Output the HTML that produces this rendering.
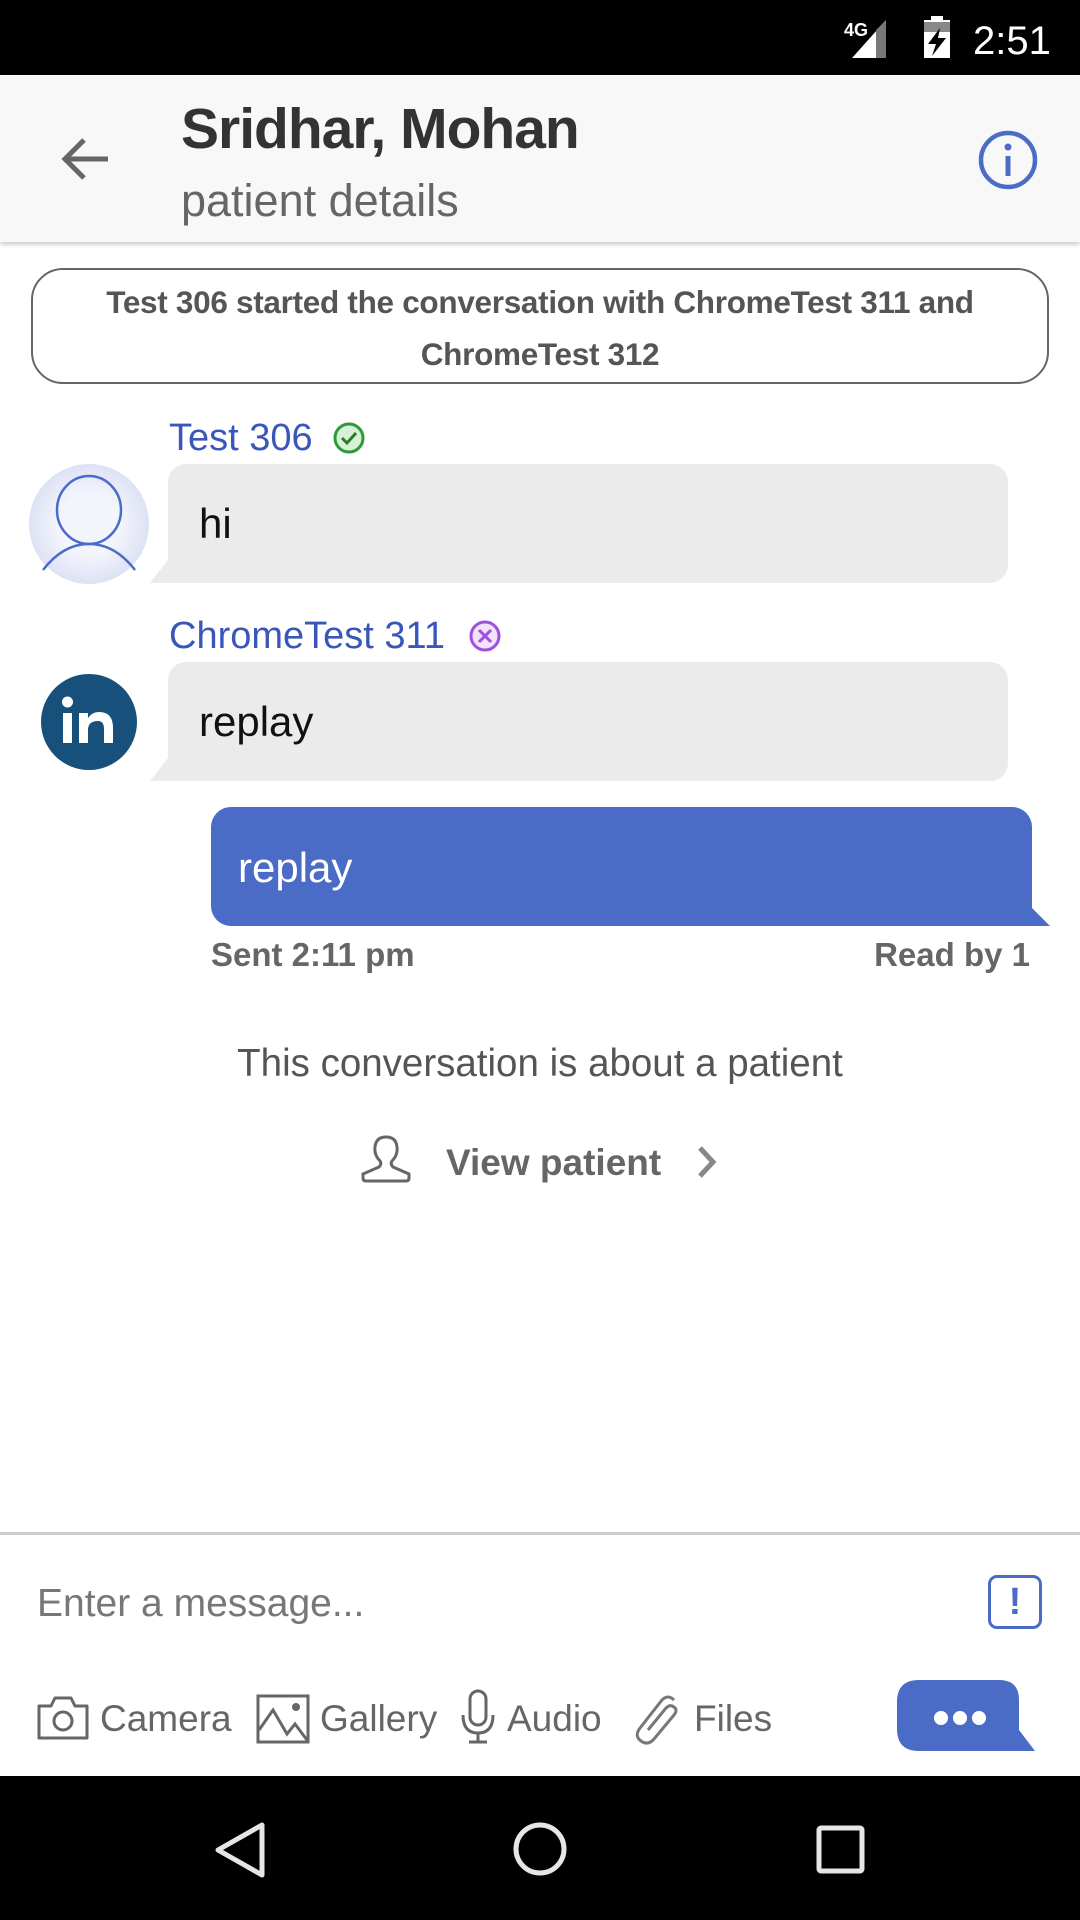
<!DOCTYPE html>
<html><head><meta charset="utf-8"><style>
*{margin:0;padding:0;box-sizing:border-box}
body{width:1080px;height:1920px;position:relative;background:#fff;font-family:"Liberation Sans",sans-serif;overflow:hidden}
.a{position:absolute}
.t{position:absolute;white-space:nowrap;line-height:1}
</style></head><body>
<div class="a" style="left:0;top:0;width:1080px;height:75px;background:#000"></div>
<svg class="a" style="left:840px;top:14px" width="230" height="50">
<text x="4" y="22" fill="#fff" font-size="18" font-weight="bold" font-family="Liberation Sans">4G</text>
<polygon points="12,44 46,6 46,44" fill="#fff"/><polygon points="36,16 46,6 46,44 36,44" fill="#777"/>
<rect x="84" y="6" width="26" height="38" fill="#fff"/><rect x="91" y="2" width="12" height="6" fill="#fff"/>
<rect x="84" y="8" width="26" height="10" fill="#888"/>
<polygon points="100,14 88,30 96,30 92,42 106,24 98,24" fill="#000"/>
<text x="133" y="40" fill="#fff" font-size="40" font-family="Liberation Sans">2:51</text>
</svg>
<div class="a" style="left:0;top:75px;width:1080px;height:167px;background:#f8f8f8;box-shadow:0 3px 4px rgba(0,0,0,.18)"></div>
<svg class="a" style="left:58px;top:134px" width="54" height="50"><path d="M50 25H8M26 6L7 25l19 19" stroke="#666" stroke-width="5" fill="none"/></svg>
<div class="t" style="left:181px;top:101px;font-size:57px;color:#333;font-weight:bold;letter-spacing:-1px">Sridhar, Mohan</div>
<div class="t" style="left:181px;top:178px;font-size:45px;color:#666">patient details</div>
<svg class="a" style="left:976px;top:128px" width="64" height="64"><circle cx="32" cy="32" r="27" stroke="#4a6cc6" stroke-width="4.5" fill="none"/><rect x="29.5" y="28" width="5" height="20" fill="#4a6cc6"/><circle cx="32" cy="19" r="3.5" fill="#4a6cc6"/></svg>

<div class="a" style="left:31px;top:268px;width:1018px;height:116px;border:2.5px solid #666;border-radius:32px"></div>
<div class="t" style="left:31px;width:1018px;top:276px;text-align:center;font-size:31.5px;font-weight:bold;color:#555;line-height:52px;letter-spacing:-0.3px">Test 306 started the conversation with ChromeTest 311 and<br>ChromeTest 312</div>

<div class="t" style="left:169px;top:419px;font-size:38px;color:#3a56b8">Test 306</div>
<svg class="a" style="left:332px;top:421px" width="34" height="34"><circle cx="17" cy="17" r="14" fill="#d6f1d6" stroke="#2d9a3a" stroke-width="3"/><path d="M10 17l5 5 9-10" stroke="#2d7a2d" stroke-width="3" fill="none"/></svg>
<svg class="a" style="left:29px;top:464px" width="122" height="122"><defs><radialGradient id="g"><stop offset="0.5" stop-color="#f4f5fc"/><stop offset="1" stop-color="#dde2f4"/></radialGradient></defs><circle cx="60" cy="60" r="60" fill="url(#g)"/><ellipse cx="60" cy="46" rx="32" ry="34" fill="none" stroke="#4a6cc6" stroke-width="2.5"/><path d="M14 106Q34 80 60 80Q86 80 106 106" fill="none" stroke="#4a6cc6" stroke-width="2.5"/></svg>
<div class="a" style="left:168px;top:464px;width:840px;height:119px;background:#ebebeb;border-radius:18px 18px 18px 0"></div>
<svg class="a" style="left:150px;top:560px" width="20" height="23"><polygon points="18,0 20,23 0,23" fill="#ebebeb"/></svg>
<div class="t" style="left:199px;top:503px;font-size:42px;color:#111">hi</div>

<div class="t" style="left:169px;top:617px;font-size:38px;color:#3a56b8">ChromeTest 311</div>
<svg class="a" style="left:468px;top:619px" width="34" height="34"><circle cx="17" cy="17" r="14" fill="#f1e3fa" stroke="#a050e0" stroke-width="3"/><path d="M11 11l12 12M23 11L11 23" stroke="#a050e0" stroke-width="3"/></svg>
<svg class="a" style="left:40px;top:673px" width="98" height="98"><circle cx="49" cy="49" r="48" fill="#17507a"/><rect x="23" y="40" width="9" height="30" fill="#fff"/><circle cx="27.5" cy="29" r="5.5" fill="#fff"/><path d="M39 70V40h9v5q4-6 11-6q14 0 14 16v15h-9V56q0-8-6-8q-10 0-10 9v13z" fill="#fff"/></svg>
<div class="a" style="left:168px;top:662px;width:840px;height:119px;background:#ebebeb;border-radius:18px 18px 18px 0"></div>
<svg class="a" style="left:150px;top:758px" width="20" height="23"><polygon points="18,0 20,23 0,23" fill="#ebebeb"/></svg>
<div class="t" style="left:199px;top:701px;font-size:42px;color:#111">replay</div>

<div class="a" style="left:211px;top:807px;width:821px;height:119px;background:#4a6cc6;border-radius:20px 20px 0 20px"></div>
<svg class="a" style="left:1030px;top:906px" width="20" height="20"><polygon points="0,0 20,20 0,20" fill="#4a6cc6"/></svg>
<div class="t" style="left:238px;top:847px;font-size:42px;color:#fff">replay</div>
<div class="t" style="left:211px;top:938px;font-size:33px;color:#666;font-weight:bold">Sent 2:11 pm</div>
<div class="t" style="right:50px;top:938px;font-size:33px;color:#666;font-weight:bold">Read by 1</div>

<div class="t" style="left:0;width:1080px;text-align:center;top:1045px;font-size:38.5px;color:#555">This conversation is about a patient</div>
<svg class="a" style="left:360px;top:1135px" width="52" height="52"><path d="M10 46h36q3 0 3-3v-4l-16-7q-3-3-1-6q6-6 5-14q-1-10-11-10t-11 10q-1 8 5 14q2 3-1 6L3 39v4q0 3 3 3z" fill="none" stroke="#666" stroke-width="3"/></svg>
<div class="t" style="left:446px;top:1144px;font-size:37px;color:#666;font-weight:bold">View patient</div>
<svg class="a" style="left:696px;top:1145px" width="24" height="34"><path d="M4 3l13 14L4 31" stroke="#888" stroke-width="5" fill="none"/></svg>

<div class="a" style="left:0;top:1532px;width:1080px;height:3px;background:#ccc"></div>
<div class="t" style="left:37px;top:1584px;font-size:39px;color:#777">Enter a message...</div>
<div class="a" style="left:988px;top:1575px;width:54px;height:54px;border:3px solid #4a6cc6;border-radius:9px;color:#4a6cc6;font-size:38px;font-weight:bold;text-align:center;line-height:48px">!</div>

<svg class="a" style="left:36px;top:1694px" width="54" height="46"><path d="M3 12h12l4-8h16l4 8h12v32H3z" fill="none" stroke="#666" stroke-width="3" stroke-linejoin="round"/><circle cx="27" cy="27" r="9" fill="none" stroke="#666" stroke-width="3"/></svg>
<div class="t" style="left:100px;top:1700px;font-size:37px;color:#666">Camera</div>
<svg class="a" style="left:256px;top:1694px" width="54" height="50"><rect x="2" y="2" width="50" height="46" fill="none" stroke="#666" stroke-width="3"/><path d="M3 36l14-20 14 24 8-10 12 16" fill="none" stroke="#666" stroke-width="3"/><circle cx="40" cy="13" r="4" fill="#666"/></svg>
<div class="t" style="left:320px;top:1700px;font-size:37px;color:#666">Gallery</div>
<svg class="a" style="left:460px;top:1689px" width="36" height="56"><rect x="10" y="2" width="16" height="34" rx="8" fill="none" stroke="#666" stroke-width="3"/><path d="M3 26q0 18 15 18t15-18M18 44v9M9 53h18" fill="none" stroke="#666" stroke-width="3"/></svg>
<div class="t" style="left:507px;top:1700px;font-size:37px;color:#666">Audio</div>
<svg class="a" style="left:634px;top:1694px" width="48" height="52"><path d="M40 6q-6-6-12 0L6 34q-6 8 1 13q7 5 13-2l20-24q4-5 0-8q-4-3-8 1L14 36" fill="none" stroke="#777" stroke-width="3"/></svg>
<div class="t" style="left:694px;top:1700px;font-size:37px;color:#666">Files</div>
<svg class="a" style="left:897px;top:1680px" width="143" height="72"><path d="M22 0h80q20 0 20 20v30l16 21H22Q0 71 0 49V22Q0 0 22 0z" fill="#4a6cc6"/><circle cx="44" cy="38" r="7" fill="#fff"/><circle cx="63" cy="38" r="7" fill="#fff"/><circle cx="82" cy="38" r="7" fill="#fff"/></svg>

<div class="a" style="left:0;top:1776px;width:1080px;height:144px;background:#000"></div>
<svg class="a" style="left:0;top:1776px" width="1080" height="144"><path d="M262 49L218 74l44 25z" fill="none" stroke="#e6e6e6" stroke-width="5" stroke-linejoin="round"/><circle cx="540" cy="73" r="24" fill="none" stroke="#e6e6e6" stroke-width="5"/><rect x="819" y="52" width="43" height="43" rx="2" fill="none" stroke="#e6e6e6" stroke-width="5"/></svg>
</body></html>
